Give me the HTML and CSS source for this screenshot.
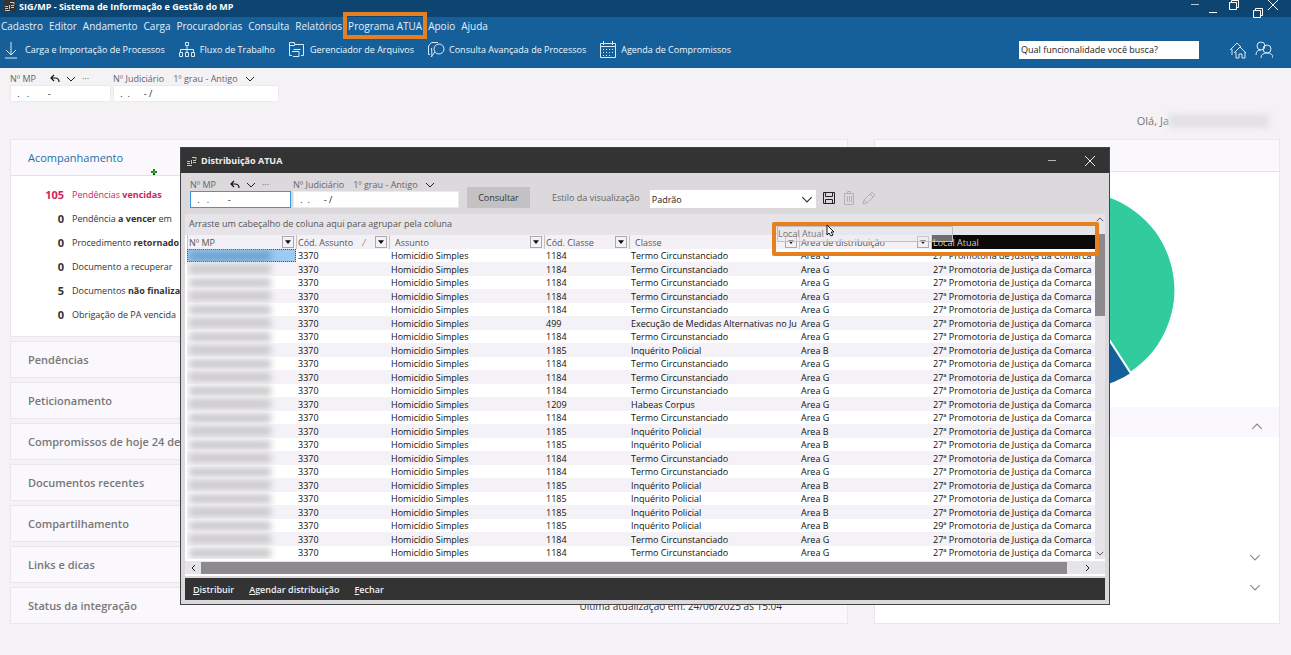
FILE: index.html
```html
<!DOCTYPE html>
<html lang="pt-BR">
<head>
  <meta charset="UTF-8">
  <meta name="viewport" content="width=device-width, initial-scale=1.0">
  <title>SIG/MP - Sistema de Informação e Gestão do MP</title>
  <link rel="stylesheet" href="styles.css">
</head>
<body>
  <!-- shared icons -->
  <svg class="sprite" aria-hidden="true">
    <symbol id="logo" viewBox="0 0 12 12">
      <path d="M1 6.500h3M1 8.500h3M5.500 5v4M7 5.500h3M7 7.500h3M6 2.500h4v2M1 10.500h5" fill="none" stroke="#c8c8c8"></path>
    </symbol>
    <symbol id="down" viewBox="0 0 10 6"><path d="M1 1l4 4 4-4" fill="none" stroke="currentColor"></path></symbol>
    <symbol id="up" viewBox="0 0 10 6"><path d="M1 5l4-4 4 4" fill="none" stroke="currentColor"></path></symbol>
    <symbol id="close" viewBox="0 0 10 10"><path d="M0 0l10 10M10 0L0 10" fill="none" stroke="currentColor"></path></symbol>
    <symbol id="min" viewBox="0 0 10 10"><path d="M1 4.500h8" fill="none" stroke="currentColor"></path></symbol>
    <symbol id="restore" viewBox="0 0 10 10"><path d="M.5 2.500h7v7h-7zM2.500 2.500v-2h7v7h-2" fill="none" stroke="currentColor"></path></symbol>
    <symbol id="undo" viewBox="0 0 10 9"><path d="M4 1L1 4l3 3M1 4h4q4 0 4 4" fill="none" stroke="#111" stroke-width="1.200"></path></symbol>
    <symbol id="filter" viewBox="0 0 8 5"><path d="M0 0h8L4 5z" fill="#111"></path></symbol>
  </svg>

  <header class="app-header">
    <div class="titlebar">
      <svg class="logo"><use href="#logo"></use></svg>
      <h1 class="app-title">SIG/MP - Sistema de Informação e Gestão do MP</h1>
      <div class="window-buttons">
        <button class="dim" aria-label="Minimizar"><svg><use href="#min"></use></svg></button>
        <button aria-label="Restaurar"><svg><use href="#restore"></use></svg></button>
        <button aria-label="Fechar"><svg><use href="#close"></use></svg></button>
      </div>
      <div class="session-buttons">
        <button aria-label="Minimizar sessão"><svg><use href="#min"></use></svg></button>
        <button aria-label="Restaurar sessão"><svg><use href="#restore"></use></svg></button>
      </div>
    </div>
    <nav class="menu">
      <a href="#">Cadastro</a>
      <a href="#">Editor</a>
      <a href="#">Andamento</a>
      <a href="#">Carga</a>
      <a href="#">Procuradorias</a>
      <a href="#">Consulta</a>
      <a href="#">Relatórios</a>
      <a href="#" class="marked">Programa ATUA</a>
      <a href="#">Apoio</a>
      <a href="#">Ajuda</a>
    </nav>
    <div class="toolbar">
      <button class="tool">
        <svg viewBox="0 0 18 18"><path d="M8 1v13M3 9l5 5 5-5M2 17h12"></path></svg>
        <span>Carga e Importação de Processos</span>
      </button>
      <button class="tool">
        <svg viewBox="0 0 18 18"><path d="M7.500 1.500h3v3h-3zM9 5v7M2.500 11V8.500h13V11M1.500 11.500h3v4h-3zM7.500 11.500h3v4h-3zM13.500 11.500h3v4h-3z"></path></svg>
        <span>Fluxo de Trabalho</span>
      </button>
      <button class="tool">
        <svg viewBox="0 0 18 18"><path d="M4 14.500H1.500v-13h5v2h9v11H13M1.500 4.500h5l1-1M5.500 8.500h7M4 10.500h7v5H5"></path></svg>
        <span>Gerenciador de Arquivos</span>
      </button>
      <button class="tool">
        <svg viewBox="0 0 18 18"><path d="M3 13.500H1.500V5l3-3.500H11M5 15.500L4.500 7"></path><circle cx="12" cy="8" r="5"></circle><path d="M8 11l-4 5"></path></svg>
        <span>Consulta Avançada de Processos</span>
      </button>
      <button class="tool">
        <svg viewBox="0 0 18 18"><path d="M1.500 2.500h15v14h-15zM1.500 5.500h15M4.500 0v4M13.500 0v4"></path><path d="M4 8.500h11M4 11.500h11M4 14.500h8" stroke-dasharray="1 2"></path></svg>
        <span>Agenda de Compromissos</span>
      </button>
      <input class="search" type="text" aria-label="Busca de funcionalidade" value="Qual funcionalidade você busca?">
      <button class="tool home" aria-label="Início">
        <svg viewBox="0 0 18 18"><path d="M1 9l7-7 4 4M3 8v6M5 12l6-6 6 6M7 11v6h3v-4h3v4h3v-6"></path></svg>
      </button>
      <button class="tool" aria-label="Usuários">
        <svg viewBox="0 0 18 18"><circle cx="6" cy="5" r="4"></circle><circle cx="12" cy="8" r="4"></circle><path d="M1 14q0-5 5-5M6 17q0-5 6-5t6 5"></path></svg>
      </button>
    </div>
  </header>

  <main class="page">
    <div class="process-search">
      <div class="field mp">
        <div class="field-label">
          <label for="mp">Nº MP</label>
          <button aria-label="Desfazer"><svg><use href="#undo"></use></svg></button>
          <button aria-label="Histórico"><svg class="chevron"><use href="#down"></use></svg></button>
          <button aria-label="Mais">···</button>
        </div>
        <input id="mp" type="text" value=" .   .        -">
      </div>
      <div class="field judiciario">
        <div class="field-label">
          <label for="jud">Nº Judiciário</label>
          <button class="degree">1º grau - Antigo <svg class="chevron"><use href="#down"></use></svg></button>
        </div>
        <input id="jud" type="text" value=" .  .      - /">
      </div>
    </div>

    <p class="greeting">Olá, Ja<span class="hidden-name"></span></p>

    <div class="panels">
      <div class="left">
        <section class="card tracking">
          <h2 class="card-title active">Acompanhamento</h2>
          <ul class="counts">
            <li class="late"><b>105</b><span>Pendências <strong>vencidas</strong></span></li>
            <li><b>0</b><span>Pendência <strong>a vencer</strong> em</span></li>
            <li><b>0</b><span>Procedimento <strong>retornado</strong></span></li>
            <li><b>0</b><span>Documento a recuperar</span></li>
            <li><b>5</b><span>Documentos <strong>não finalizados</strong></span></li>
            <li><b>0</b><span>Obrigação de PA vencida</span></li>
          </ul>
        </section>
        <section class="card"><h2 class="card-title">Pendências</h2></section>
        <section class="card"><h2 class="card-title">Peticionamento</h2></section>
        <section class="card"><h2 class="card-title">Compromissos de hoje 24 de</h2></section>
        <section class="card"><h2 class="card-title">Documentos recentes</h2></section>
        <section class="card"><h2 class="card-title">Compartilhamento</h2></section>
        <section class="card"><h2 class="card-title">Links e dicas</h2></section>
        <section class="card status">
          <h2 class="card-title">Status da integração</h2>
          <span class="updated">Última atualização em: 24/06/2025 às 15:04</span>
        </section>
      </div>

      <section class="card right">
        <div class="chart-head"></div>
        <svg class="pie" viewBox="0 0 196 196">
          <circle cx="98" cy="98" r="98" fill="#15609b"></circle>
          <path d="M98 98V0a98 98 0 0 1 53 180z" fill="#31cb9e" stroke="#fff" stroke-width="2"></path>
        </svg>
        <div class="accordion">
          <button class="open" aria-label="Recolher"><svg><use href="#up"></use></svg></button>
          <div class="accordion-body"></div>
          <button aria-label="Expandir"><svg><use href="#down"></use></svg></button>
          <button aria-label="Expandir"><svg><use href="#down"></use></svg></button>
        </div>
      </section>
    </div>

    <svg class="cross" viewBox="0 0 8 8"><path d="M3 1h2v2h2v2H5v2H3V5H1V3h2z" fill="#111"></path><path d="M4 1v5M1 4h6" stroke="#2f2"></path></svg>
  </main>

  <div class="dialog" role="dialog" aria-labelledby="dialog-title">
    <div class="dialog-title">
      <svg class="logo"><use href="#logo"></use></svg>
      <h2 id="dialog-title">Distribuição ATUA</h2>
      <button class="dim" aria-label="Minimizar janela"><svg><use href="#min"></use></svg></button>
      <button aria-label="Fechar janela"><svg><use href="#close"></use></svg></button>
    </div>

    <div class="filters">
      <div class="field mp">
        <div class="field-label">
          <label for="dlg-mp">Nº MP</label>
          <button aria-label="Desfazer"><svg><use href="#undo"></use></svg></button>
          <button aria-label="Histórico"><svg class="chevron"><use href="#down"></use></svg></button>
          <button aria-label="Mais">···</button>
        </div>
        <input id="dlg-mp" class="focused" type="text" value=" .   .        -">
      </div>
      <div class="field judiciario">
        <div class="field-label">
          <label for="dlg-jud">Nº Judiciário</label>
          <button class="degree">1º grau - Antigo <svg class="chevron"><use href="#down"></use></svg></button>
        </div>
        <input id="dlg-jud" type="text" value=" .  .      - /">
      </div>
      <button class="search-button">Consultar</button>
      <label class="style-label" for="style">Estilo da visualização</label>
      <div class="select">
        <select id="style"><option>Padrão</option></select>
        <svg><use href="#down"></use></svg>
      </div>
      <div class="style-tools">
        <button aria-label="Salvar estilo"><svg viewBox="0 0 14 14"><path d="M1.500 1.500h11v11h-11zM3.500 1.500v4h7v-4M3.500 12.500v-4h7v4" fill="none" stroke="#222"></path></svg></button>
        <button aria-label="Excluir estilo" disabled><svg viewBox="0 0 14 14"><path d="M2 2.500h10M5.500 2.500v-2h3v2M2.500 3v10.500h9V3M5.500 5v6M7.500 5v6M9.500 5v6" fill="none" stroke="#b4b2b5"></path></svg></button>
        <button aria-label="Editar estilo" disabled><svg viewBox="0 0 14 14"><path d="M1 13l1-4 8-8 3 3-8 8zM8 3l3 3M2 9l3 3" fill="none" stroke="#b4b2b5"></path></svg></button>
      </div>
    </div>

    <div class="grid">
      <div class="grid-main">
        <div class="group-panel">Arraste um cabeçalho de coluna aqui para agrupar pela coluna</div>
        <table class="data">
          <thead>
            <tr>
              <th class="c-mp"><div>Nº MP <button aria-label="Filtrar"><svg><use href="#filter"></use></svg></button></div></th>
              <th class="c-cod"><div>Cód. Assunto <i>/</i><button aria-label="Filtrar"><svg><use href="#filter"></use></svg></button></div></th>
              <th class="c-subject inset"><div>Assunto <button aria-label="Filtrar"><svg><use href="#filter"></use></svg></button></div></th>
              <th class="c-class-cod"><div>Cód. Classe <button aria-label="Filtrar"><svg><use href="#filter"></use></svg></button></div></th>
              <th class="c-class inset"><div>Classe <button aria-label="Filtrar"><svg><use href="#filter"></use></svg></button></div></th>
              <th class="c-area"><div>Area de distribuição <button aria-label="Filtrar"><svg><use href="#filter"></use></svg></button></div></th>
              <th class="dragging"><div>Local Atual</div></th>
            </tr>
          </thead>
          <tbody>
            <tr class="selected"><td><span class="masked"></span></td><td>3370</td><td>Homicídio Simples</td><td>1184</td><td>Termo Circunstanciado</td><td>Area G</td><td>27ª Promotoria de Justiça da Comarca</td></tr>
            <tr><td><span class="masked"></span></td><td>3370</td><td>Homicídio Simples</td><td>1184</td><td>Termo Circunstanciado</td><td>Area G</td><td>27ª Promotoria de Justiça da Comarca</td></tr>
            <tr><td><span class="masked"></span></td><td>3370</td><td>Homicídio Simples</td><td>1184</td><td>Termo Circunstanciado</td><td>Area G</td><td>27ª Promotoria de Justiça da Comarca</td></tr>
            <tr><td><span class="masked"></span></td><td>3370</td><td>Homicídio Simples</td><td>1184</td><td>Termo Circunstanciado</td><td>Area G</td><td>27ª Promotoria de Justiça da Comarca</td></tr>
            <tr><td><span class="masked"></span></td><td>3370</td><td>Homicídio Simples</td><td>1184</td><td>Termo Circunstanciado</td><td>Area G</td><td>27ª Promotoria de Justiça da Comarca</td></tr>
            <tr><td><span class="masked"></span></td><td>3370</td><td>Homicídio Simples</td><td>499</td><td>Execução de Medidas Alternativas no Ju</td><td>Area G</td><td>27ª Promotoria de Justiça da Comarca</td></tr>
            <tr><td><span class="masked"></span></td><td>3370</td><td>Homicídio Simples</td><td>1184</td><td>Termo Circunstanciado</td><td>Area G</td><td>27ª Promotoria de Justiça da Comarca</td></tr>
            <tr><td><span class="masked"></span></td><td>3370</td><td>Homicídio Simples</td><td>1185</td><td>Inquérito Policial</td><td>Area B</td><td>27ª Promotoria de Justiça da Comarca</td></tr>
            <tr><td><span class="masked"></span></td><td>3370</td><td>Homicídio Simples</td><td>1184</td><td>Termo Circunstanciado</td><td>Area G</td><td>27ª Promotoria de Justiça da Comarca</td></tr>
            <tr><td><span class="masked"></span></td><td>3370</td><td>Homicídio Simples</td><td>1184</td><td>Termo Circunstanciado</td><td>Area G</td><td>27ª Promotoria de Justiça da Comarca</td></tr>
            <tr><td><span class="masked"></span></td><td>3370</td><td>Homicídio Simples</td><td>1184</td><td>Termo Circunstanciado</td><td>Area G</td><td>27ª Promotoria de Justiça da Comarca</td></tr>
            <tr><td><span class="masked"></span></td><td>3370</td><td>Homicídio Simples</td><td>1209</td><td>Habeas Corpus</td><td>Area G</td><td>27ª Promotoria de Justiça da Comarca</td></tr>
            <tr><td><span class="masked"></span></td><td>3370</td><td>Homicídio Simples</td><td>1184</td><td>Termo Circunstanciado</td><td>Area G</td><td>27ª Promotoria de Justiça da Comarca</td></tr>
            <tr><td><span class="masked"></span></td><td>3370</td><td>Homicídio Simples</td><td>1185</td><td>Inquérito Policial</td><td>Area B</td><td>27ª Promotoria de Justiça da Comarca</td></tr>
            <tr><td><span class="masked"></span></td><td>3370</td><td>Homicídio Simples</td><td>1185</td><td>Inquérito Policial</td><td>Area B</td><td>27ª Promotoria de Justiça da Comarca</td></tr>
            <tr><td><span class="masked"></span></td><td>3370</td><td>Homicídio Simples</td><td>1184</td><td>Termo Circunstanciado</td><td>Area G</td><td>27ª Promotoria de Justiça da Comarca</td></tr>
            <tr><td><span class="masked"></span></td><td>3370</td><td>Homicídio Simples</td><td>1184</td><td>Termo Circunstanciado</td><td>Area G</td><td>27ª Promotoria de Justiça da Comarca</td></tr>
            <tr><td><span class="masked"></span></td><td>3370</td><td>Homicídio Simples</td><td>1185</td><td>Inquérito Policial</td><td>Area B</td><td>27ª Promotoria de Justiça da Comarca</td></tr>
            <tr><td><span class="masked"></span></td><td>3370</td><td>Homicídio Simples</td><td>1185</td><td>Inquérito Policial</td><td>Area B</td><td>27ª Promotoria de Justiça da Comarca</td></tr>
            <tr><td><span class="masked"></span></td><td>3370</td><td>Homicídio Simples</td><td>1185</td><td>Inquérito Policial</td><td>Area B</td><td>27ª Promotoria de Justiça da Comarca</td></tr>
            <tr><td><span class="masked"></span></td><td>3370</td><td>Homicídio Simples</td><td>1185</td><td>Inquérito Policial</td><td>Area B</td><td>29ª Promotoria de Justiça da Comarca</td></tr>
            <tr><td><span class="masked"></span></td><td>3370</td><td>Homicídio Simples</td><td>1184</td><td>Termo Circunstanciado</td><td>Area G</td><td>27ª Promotoria de Justiça da Comarca</td></tr>
            <tr><td><span class="masked"></span></td><td>3370</td><td>Homicídio Simples</td><td>1184</td><td>Termo Circunstanciado</td><td>Area G</td><td>27ª Promotoria de Justiça da Comarca</td></tr>
          </tbody>
        </table>
      </div>
      <div class="v-scroll">
        <svg><use href="#up"></use></svg>
        <div class="v-thumb"></div>
        <svg class="end"><use href="#down"></use></svg>
      </div>
      <div class="h-scroll">
        <svg viewBox="0 0 6 10"><path d="M5 2L2 5l3 3" fill="none" stroke="#222"></path></svg>
        <div class="h-thumb"></div>
        <svg viewBox="0 0 6 10"><path d="M1 2l3 3-3 3" fill="none" stroke="#222"></path></svg>
      </div>

      <!-- column being dragged to the group panel -->
      <div class="drag-ghost">Local Atual</div>
      <div class="drag-mark"></div>
      <svg class="pointer" viewBox="0 0 9 13"><path d="M1 1v10l2-2 2 3 2-1-2-3h3z" fill="#fff" stroke="#111"></path></svg>
    </div>

    <div class="dialog-footer">
      <button><u>D</u>istribuir</button>
      <button><u>A</u>gendar distribuição</button>
      <button><u>F</u>echar</button>
    </div>
  </div>
</body>
</html>
```
FILE: styles.css
```css
* {
  box-sizing: border-box;
}

body {
  margin: 0;
  min-height: 100vh;
  position: relative;
  font-family: "Open Sans", "Noto Sans", sans-serif;
  font-size: 9px;
  color: #333;
  background: #f4f2f5;
}

button {
  padding: 0;
  border: none;
  background: none;
  font: inherit;
  color: inherit;
  cursor: pointer;
}

input,
select {
  min-width: 0;
  border: none;
  border-radius: 0;
  background: #fff;
  font: inherit;
  color: #222;
}

h1,
h2,
p,
ul {
  margin: 0;
  padding: 0;
}

svg {
  display: block;
}

.sprite {
  position: absolute;
  width: 0;
  height: 0;
}

.logo {
  width: 12px;
  height: 12px;
}

.dim {
  opacity: 0.7;
}

/* App header */
.app-header {
  background: #15609b;
  color: #fff;
}

.titlebar {
  position: relative;
  display: flex;
  gap: 3px;
  height: 17px;
  padding-left: 4px;
  background: #0d4570;
}

.titlebar .logo {
  background: #333;
}

.app-title {
  flex: 1;
  font-size: 9px;
  font-weight: 700;
  line-height: 14px;
}

.window-buttons {
  display: flex;
  gap: 29px;
  padding-right: 13px;
}

.window-buttons svg,
.session-buttons svg {
  width: 10px;
  height: 10px;
}

.window-buttons button {
  height: 10px;
}

.session-buttons {
  position: absolute;
  right: 28px;
  top: 8px;
  display: flex;
  gap: 35px;
}

.menu {
  display: flex;
  gap: 6px;
  padding: 0 1px;
  font-size: 10px;
  line-height: 18px;
}

.menu a {
  color: #e6eef5;
  text-decoration: none;
}

.menu .marked {
  position: relative;
}

.menu .marked::after {
  content: "";
  position: absolute;
  inset: -5px -5px -4px;
  border: 4px solid #e58020;
}

.toolbar {
  display: flex;
  align-items: center;
  gap: 13px;
  height: 33px;
  padding: 0 18px 4px 3px;
}

.tool {
  display: flex;
  align-items: center;
  gap: 4px;
  color: #f2f6fa;
}

.tool svg {
  width: 18px;
  height: 18px;
  fill: none;
  stroke: #dce8f2;
}

.search {
  width: 180px;
  height: 18px;
  margin-left: auto;
  padding: 0 2px;
}

.home {
  margin-left: 17px;
}

.home + .tool {
  margin-left: -5px;
}

/* Process number fields */
.process-search {
  display: flex;
  gap: 2px;
  padding: 4px 10px 0;
}

.field.mp {
  width: 101px;
}

.field.judiciario {
  width: 166px;
}

.field-label {
  display: flex;
  align-items: center;
  gap: 6px;
  height: 13px;
  color: #666;
}

.field-label button {
  height: 13px;
}

.field-label svg {
  width: 10px;
  height: 9px;
}

.field-label .chevron {
  height: 6px;
  color: #222;
}

.mp label {
  margin-right: 8px;
}

.field-label .degree {
  display: flex;
  gap: 7px;
  align-items: center;
  margin-left: 3px;
}

.field input {
  display: block;
  width: 100%;
  height: 17px;
  padding: 0 4px;
  border: 1px solid #eceaed;
  white-space: pre;
}

.field .focused {
  border-color: #3c96dc;
}

/* Home page */
.greeting {
  display: flex;
  justify-content: flex-end;
  align-items: center;
  height: 37px;
  padding-right: 22px;
  font-size: 11px;
  color: #777;
}

.hidden-name {
  width: 100px;
  height: 14px;
  background: #e2e0e3;
  filter: blur(3px);
}

.panels {
  display: grid;
  grid-template-columns: minmax(0, 1fr) 406px;
  gap: 26px;
  padding: 0 11px 31px 10px;
}

.left {
  display: flex;
  flex-direction: column;
  gap: 4px;
}

.card {
  background: #faf8fc;
  border: 1px solid #e9e7ea;
}

.card-title {
  padding: 0 17px;
  font-size: 11px;
  font-weight: 600;
  line-height: 35px;
  color: #777;
}

.card-title.active {
  color: #2370a8;
  font-weight: 500;
  border-bottom: 1px solid #e4e2e5;
}

.counts {
  padding: 7px 0 9px 21px;
  list-style: none;
  background: #fff;
  line-height: 24px;
}

.counts li {
  display: flex;
  gap: 8px;
  white-space: nowrap;
}

.counts b {
  width: 32px;
  text-align: right;
  font-size: 11px;
}

.late {
  color: #cf2557;
}

.status {
  display: flex;
  justify-content: space-between;
  align-items: center;
}

.updated {
  padding-right: 65px;
  font-size: 10px;
}

.right {
  display: flex;
  flex-direction: column;
  background: #fff;
}

.chart-head {
  height: 32px;
  background: #faf8fc;
  border-bottom: 1px solid #e4e2e5;
}

.pie {
  width: 198px;
  margin: 19px auto 18px;
}

.accordion button {
  display: flex;
  justify-content: flex-end;
  align-items: center;
  width: 100%;
  height: 30px;
  padding-right: 18px;
  color: #888;
}

.accordion svg {
  width: 12px;
  height: 7px;
}

.accordion .open {
  padding: 8px 16px 0 0;
  background: #faf8fc;
}

.accordion-body {
  height: 105px;
}

.cross {
  position: absolute;
  left: 150px;
  top: 168px;
  width: 8px;
  height: 8px;
}

/* Distribution dialog */
.dialog {
  position: absolute;
  left: 180px;
  right: 181px;
  top: 147px;
  padding: 0 4px 4px;
  background: #dbd9dc;
  border: 1px solid #444;
}

.dialog-title {
  display: flex;
  align-items: center;
  gap: 3px;
  height: 25px;
  margin: 0 -4px;
  padding: 0 14px 0 5px;
  background: #333;
  color: #eee;
}

.dialog-title h2 {
  flex: 1;
  font-size: 9px;
  font-weight: 700;
}

.dialog-title button {
  margin-left: 25px;
}

.dialog-title button svg {
  width: 10px;
  height: 10px;
}

.filters {
  display: flex;
  align-items: flex-end;
  gap: 2px;
  padding: 5px 5px 6px;
}

.search-button {
  width: 63px;
  height: 21px;
  margin-left: 6px;
  background: #c3c1c4;
}

.style-label {
  margin-left: 20px;
  line-height: 20px;
  color: #666;
}

.select {
  position: relative;
  width: 166px;
  margin-left: 8px;
}

.select select {
  display: block;
  width: 100%;
  height: 18px;
  padding: 0 2px;
  appearance: none;
}

.select svg {
  position: absolute;
  right: 3px;
  top: 6px;
  width: 12px;
  height: 7px;
  pointer-events: none;
}

.style-tools {
  display: flex;
  gap: 6px;
  margin-left: 4px;
  padding-bottom: 3px;
}

.style-tools svg {
  width: 14px;
  height: 14px;
}

.grid {
  position: relative;
  display: grid;
  grid-template-columns: minmax(0, 1fr) 10px;
  background: #fff;
  border-bottom: 2px solid #fff;
}

.group-panel {
  height: 21px;
  padding-left: 4px;
  line-height: 20px;
  color: #555;
  background: #e6e4e8;
}

.data {
  width: 100%;
  padding-left: 2px;
  border-spacing: 0;
  table-layout: fixed;
  line-height: 13px;
  color: #111;
}

.c-mp { width: 109px; }
.c-cod { width: 93px; }
.c-subject { width: 155px; }
.c-class-cod { width: 85px; }
.c-class { width: 170px; }
.c-area { width: 132px; }

.data th {
  height: 14px;
  padding: 0 2px 0 1px;
  border-left: 1px solid #c6c4c7;
  background: #f3f1f5;
  text-align: left;
  font-weight: 400;
  color: #555;
}

.data th div {
  display: flex;
  align-items: center;
}

.data th.inset {
  padding-left: 5px;
}

.data th i {
  margin-left: 9px;
  color: #888;
}

.data th button {
  display: flex;
  align-items: center;
  justify-content: center;
  width: 12px;
  height: 12px;
  margin-left: auto;
  border: 1px solid #aaa;
}

.data th button svg {
  width: 6px;
  height: 4px;
}

.data th.dragging {
  background: #0a0a0a;
  color: #ccc;
}

.data td {
  height: 13px;
  padding: 0 0 0 2px;
  overflow: hidden;
  white-space: nowrap;
}

.data tbody tr:nth-child(even) td {
  height: 14px;
  background: #f4f2f6;
}

.masked {
  display: block;
  width: 82px;
  height: 10px;
  background: #cccacd;
  filter: blur(3px);
}

.data .selected td:first-child {
  background: #9ccbf1;
  outline: 1px dotted #456;
  outline-offset: -1px;
}

.selected .masked {
  background: #6fa3cd;
}

.v-scroll {
  display: flex;
  flex-direction: column;
  align-items: center;
  padding: 3px 0;
  background: #e6e4e8;
}

.v-scroll svg {
  width: 8px;
  height: 5px;
}

.v-scroll .end {
  margin-top: auto;
}

.v-thumb {
  width: 10px;
  height: 82px;
  margin-top: 12px;
  background: #8c8a8d;
}

.h-scroll {
  grid-column: 1 / -1;
  display: flex;
  align-items: center;
  gap: 5px;
  height: 13px;
  margin-top: 2px;
  padding: 0 14px 0 5px;
  background: #e6e4e8;
}

.h-scroll svg {
  width: 6px;
  height: 10px;
}

.h-thumb {
  flex: 1;
  height: 12px;
  margin-right: 13px;
  background: #8c8a8d;
}

.drag-ghost {
  position: absolute;
  right: 152px;
  top: 12px;
  width: 176px;
  height: 16px;
  line-height: 14px;
  border: 1px solid #c2c0c3;
  background: rgba(235, 233, 237, 0.45);
  color: #777;
}

.drag-mark {
  position: absolute;
  right: 6px;
  top: 8px;
  width: 327px;
  height: 34px;
  border: 4px solid #e58020;
  border-radius: 2px;
}

.pointer {
  position: absolute;
  right: 270px;
  top: 10px;
  width: 9px;
  height: 13px;
}

.dialog-footer {
  display: flex;
  gap: 15px;
  height: 22px;
  margin-top: 2px;
  padding: 0 8px;
  background: #333;
  color: #f2f2f2;
  font-weight: 600;
}
```
